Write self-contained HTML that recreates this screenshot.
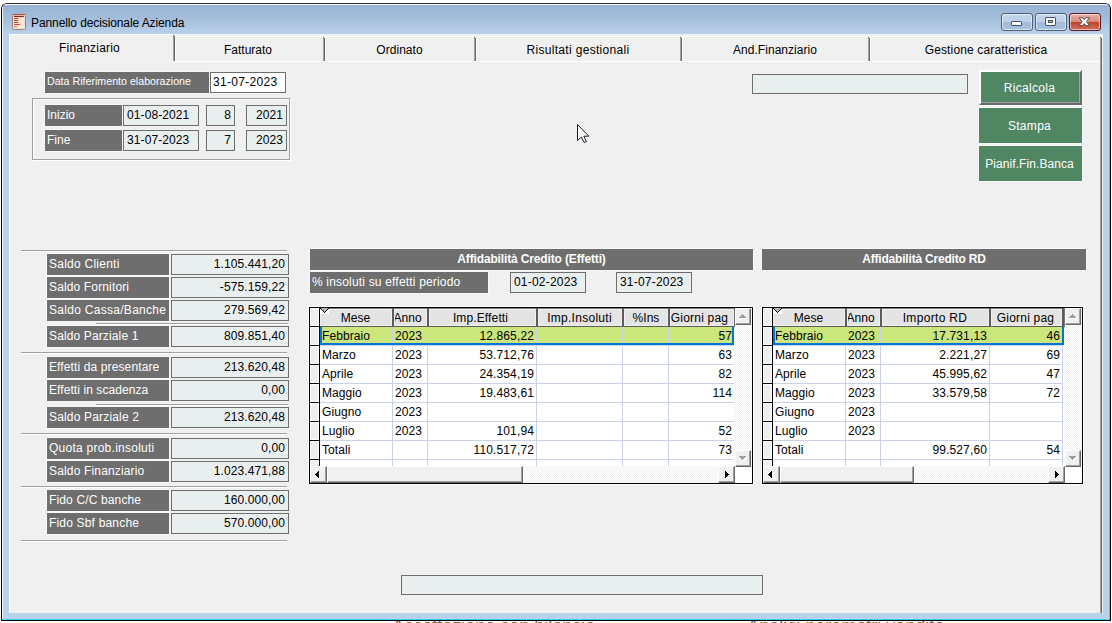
<!DOCTYPE html>
<html lang="it"><head><meta charset="utf-8"><title>Pannello decisionale Azienda</title>
<style>
html,body{margin:0;padding:0;background:#fff;}
body{width:1112px;height:623px;position:relative;overflow:hidden;font-family:"Liberation Sans",Arial,sans-serif;font-size:12px;color:#000;}
div,span,svg{position:absolute;box-sizing:border-box;white-space:nowrap;}
.win{left:1px;top:3px;width:1110px;height:618px;border:1px solid #000;border-top-color:#2c2c2c;border-radius:6px 6px 0 0;background:#b9d1ea;overflow:hidden;}
.cap{left:0;top:0;width:1108px;height:30px;background:linear-gradient(#98b3d3 0,#a1bbd9 42%,#b9d1ea 100%);}
.client{left:9px;top:34px;width:1094px;height:579px;background:#f0f0f0;overflow:hidden;}
.lbl{background:#6e6e6e;box-shadow:0 0 0 1px #f7f7f7;color:#fff;line-height:20px;padding-left:2px;}
.fld{background:#e9efef;border:1px solid #6e6e6e;line-height:19px;padding:0 3px 0 3px;letter-spacing:0.1px;}
.r{text-align:right;}
.cell.r{letter-spacing:.13px;}
.ln{height:2px;border-top:1px solid #a0a0a0;border-bottom:1px solid #fff;}
.btn{background:#508661;color:#fff;text-align:center;line-height:35px;}
.hd{background:#6e6e6e;box-shadow:0 0 0 1px #f7f7f7;color:#fff;font-weight:bold;text-align:center;line-height:20px;}
.tab{text-align:center;line-height:14px;}
.sep{width:2px;border-left:1px solid #a0a0a0;border-right:1px solid #696969;}
.grid{border:1px solid #000;background:#fff;overflow:hidden;box-shadow:0 0 0 1px #fff;}
.gh{background:#e4e4e4;border:1px solid #f0f0f0;height:17px;line-height:17px;overflow:hidden;}
.rh{background:#efefef;border-right:1px solid #000;border-bottom:1px solid #000;left:0;width:10px;box-shadow:inset 1px 1px 0 #fff,inset -1px -1px 0 #fff;}
.cell{letter-spacing:.08px;height:19px;border-right:1px solid #c9d2e9;border-bottom:1px solid #c9d2e9;line-height:18px;padding:0 2px 0 2px;overflow:hidden;}
.sel{background:#cbe77b;}
.sb{background:#f0f0f0;border:1px solid;border-color:#fff #696969 #696969 #fff;box-shadow:inset -1px -1px 0 #a0a0a0;}
.trk{background-color:#f8f8f8;background-image:conic-gradient(#fff 25%,#f0f0f0 0 50%,#fff 0 75%,#f0f0f0 0);background-size:2px 2px;}
.tb{top:13px;width:32px;height:18px;border:1px solid #4f607a;border-radius:3px;box-shadow:inset 0 0 0 1px rgba(255,255,255,.55);}
</style></head><body>

<div style="left:383px;top:616px;font-size:18px;color:#6a6a6a;line-height:20px;"><span style="position:static;font-size:12px;vertical-align:-4px;">&#8226;</span>&nbsp;Accettazione con bilancia</div>
<div style="left:738px;top:616px;font-size:18px;color:#6a6a6a;line-height:20px;"><span style="position:static;font-size:12px;vertical-align:-4px;">&#8226;</span>&nbsp;Analisi parametri vendita</div>
<div class="win">
<div class="cap"></div>
<div style="left:0;top:0;width:1108px;height:1px;background:rgba(255,255,255,.92);"></div>
<div style="left:0;top:0;width:1px;height:616px;background:rgba(255,255,255,.85);"></div>
<div style="left:1107px;top:2px;width:1px;height:614px;background:#35d3f2;"></div>
<div style="left:0;top:615px;width:1108px;height:1px;background:#35d3f2;"></div>
</div>
<svg style="left:12px;top:14px" width="14" height="16" viewBox="0 0 14 16">
<defs><linearGradient id="ig" x1="0" y1="0" x2="1" y2="1"><stop offset="0" stop-color="#fdd3aa"/><stop offset="1" stop-color="#f3e6dc"/></linearGradient>
<linearGradient id="il" x1="0" y1="0" x2="1" y2="0"><stop offset="0" stop-color="#b80f0f"/><stop offset="1" stop-color="#5a3a3a"/></linearGradient></defs>
<rect x="0.5" y="0.5" width="13" height="15" rx="1" fill="url(#ig)" stroke="#97838a"/>
<rect x="1" y="0" width="12" height="1" fill="#b4503f"/>
<rect x="2" y="1.8" width="10" height="1.2" fill="url(#il)"/>
<rect x="2" y="4" width="4.2" height="1" fill="#cc4a38"/><rect x="2" y="6" width="4.2" height="1" fill="#cc4a38"/>
<rect x="2" y="8" width="4.2" height="1" fill="#cc4a38"/><rect x="2" y="10" width="5.8" height="1" fill="#cc4a38"/>
<rect x="2" y="12.2" width="3" height="1" fill="#d8806c"/>
<rect x="7.5" y="4" width="4.5" height="3.4" fill="#f6efe8" opacity=".8"/><rect x="9.5" y="8" width="2.5" height="3" fill="#f6efe8" opacity=".8"/><rect x="6" y="12" width="6" height="1.4" fill="#f6efe8" opacity=".9"/>
</svg>
<div style="left:31px;top:15px;line-height:16px;font-size:12px;letter-spacing:-0.1px;">Pannello decisionale Azienda</div>
<div class="tb" style="left:1001px;background:linear-gradient(#c3d5ea 0,#bdd0e8 48%,#a3bbd8 52%,#a9c1de 100%);"><div style="left:9px;top:7px;width:11px;height:5px;background:#fff;border:1px solid #4a5668;border-radius:1px;"></div></div>
<div class="tb" style="left:1035px;background:linear-gradient(#c3d5ea 0,#bdd0e8 48%,#a3bbd8 52%,#a9c1de 100%);"><div style="left:9px;top:3px;width:11px;height:9px;background:#fff;border:1px solid #4a5668;border-radius:1px;"><div style="left:2px;top:2px;width:5px;height:3px;background:#9fb6d3;border:1px solid #4a5668;"></div></div></div>
<div class="tb" style="left:1069px;border-color:#541a28;background:linear-gradient(#e9b0a6 0,#db8a7c 48%,#c0432d 52%,#d26e5a 100%);"><svg style="left:8px;top:3px" width="13" height="10" viewBox="0 0 13 10"><path d="M1.2,0.8 L4.9,0.8 L6.3,2.6 L7.7,0.8 L11.4,0.8 L8.5,4.6 L11.5,8.6 L7.8,8.6 L6.3,6.6 L4.8,8.6 L1.1,8.6 L4.1,4.6 Z" fill="#fff" stroke="#55505a" stroke-width="1" stroke-linejoin="round"/></svg></div>
<div class="client"></div>
<div style="left:9px;top:34px;width:1px;height:579px;background:#fff;"></div>
<div style="left:9px;top:34px;width:164px;height:1px;background:#fff;"></div>
<div style="left:173px;top:61px;width:927px;height:1px;background:#fff;"></div>
<div style="left:1100px;top:38px;width:2px;height:575px;background:#696969;border-left:1px solid #a0a0a0;"></div>
<div style="left:1100px;top:37px;width:1px;height:1px;background:#696969;"></div>
<div class="sep" style="left:173px;top:36px;width:2px;height:25px;"></div>
<div style="left:173px;top:35px;width:1px;height:1px;background:#696969;"></div>
<div style="left:175px;top:37px;width:1px;height:24px;background:#fafafa;"></div>
<div style="left:176px;top:36px;width:146px;height:1px;background:#fff;"></div>
<div class="sep" style="left:323px;top:38px;width:2px;height:23px;"></div>
<div style="left:323px;top:37px;width:1px;height:1px;background:#696969;"></div>
<div style="left:325px;top:38px;width:1px;height:23px;background:#fafafa;"></div>
<div style="left:326px;top:37px;width:1px;height:1px;background:#fff;"></div>
<div style="left:327px;top:36px;width:146px;height:1px;background:#fff;"></div>
<div class="sep" style="left:474px;top:38px;width:2px;height:23px;"></div>
<div style="left:474px;top:37px;width:1px;height:1px;background:#696969;"></div>
<div style="left:476px;top:38px;width:1px;height:23px;background:#fafafa;"></div>
<div style="left:477px;top:37px;width:1px;height:1px;background:#fff;"></div>
<div style="left:478px;top:36px;width:201px;height:1px;background:#fff;"></div>
<div class="sep" style="left:680px;top:38px;width:2px;height:23px;"></div>
<div style="left:680px;top:37px;width:1px;height:1px;background:#696969;"></div>
<div style="left:682px;top:38px;width:1px;height:23px;background:#fafafa;"></div>
<div style="left:683px;top:37px;width:1px;height:1px;background:#fff;"></div>
<div style="left:684px;top:36px;width:183px;height:1px;background:#fff;"></div>
<div class="sep" style="left:868px;top:38px;width:2px;height:23px;"></div>
<div style="left:868px;top:37px;width:1px;height:1px;background:#696969;"></div>
<div style="left:870px;top:38px;width:1px;height:23px;background:#fafafa;"></div>
<div style="left:871px;top:37px;width:1px;height:1px;background:#fff;"></div>
<div style="left:872px;top:36px;width:227px;height:1px;background:#fff;"></div>
<div class="tab" style="left:8px;top:41px;width:163px;height:14px;letter-spacing:0.2px;">Finanziario</div>
<div class="tab" style="left:174px;top:43px;width:148px;height:14px;letter-spacing:0px;">Fatturato</div>
<div class="tab" style="left:325px;top:43px;width:149px;height:14px;letter-spacing:0.05px;">Ordinato</div>
<div class="tab" style="left:476px;top:43px;width:204px;height:14px;letter-spacing:0.32px;">Risultati gestionali</div>
<div class="tab" style="left:682px;top:43px;width:186px;height:14px;letter-spacing:0.04px;">And.Finanziario</div>
<div class="tab" style="left:871px;top:43px;width:230px;height:14px;letter-spacing:0.14px;">Gestione caratteristica</div>
<div class="lbl" style="left:45px;top:72px;width:164px;height:21px;font-size:10.67px;line-height:19px;">Data Riferimento elaborazione</div>
<div class="fld" style="left:210px;top:72px;width:76px;height:21px;background:#fff;padding-left:2px;letter-spacing:0.3px;">31-07-2023</div>
<div style="left:32px;top:98px;width:258px;height:62px;border:1px solid #a0a0a0;box-shadow:inset 1px 1px 0 #fff,1px 1px 0 #fff;"></div>
<div class="lbl" style="left:45px;top:105px;width:77px;height:21px;">Inizio</div>
<div class="fld" style="left:123px;top:105px;width:76px;height:21px;">01-08-2021</div>
<div class="fld r" style="left:206px;top:105px;width:29px;height:21px;">8</div>
<div class="fld r" style="left:246px;top:105px;width:41px;height:21px;">2021</div>
<div class="lbl" style="left:45px;top:130px;width:77px;height:21px;">Fine</div>
<div class="fld" style="left:123px;top:130px;width:76px;height:21px;">31-07-2023</div>
<div class="fld r" style="left:206px;top:130px;width:29px;height:21px;">7</div>
<div class="fld r" style="left:246px;top:130px;width:41px;height:21px;">2023</div>
<div class="fld" style="left:752px;top:74px;width:216px;height:20px;"></div>
<div class="btn" style="left:979px;top:70px;width:103px;height:35px;border:2px solid;border-color:#fff #696969 #696969 #fff;box-shadow:inset -1px -1px 0 #a0a0a0,1px 1px 0 #f9f9f9;line-height:33px;letter-spacing:0.3px;padding-right:2px;">Ricalcola</div>
<div class="btn" style="left:979px;top:108px;width:103px;height:35px;letter-spacing:0.3px;line-height:37px;padding-right:2px;box-shadow:0 0 0 1px #f8f8f8;">Stampa</div>
<div class="btn" style="left:979px;top:146px;width:103px;height:35px;letter-spacing:0.08px;line-height:37px;padding-right:2px;box-shadow:0 0 0 1px #f8f8f8;">Pianif.Fin.Banca</div>
<div class="lbl" style="left:47px;top:254px;width:122px;height:21px;letter-spacing:0.25px;">Saldo Clienti</div>
<div class="fld r" style="left:171px;top:254px;width:118px;height:21px;letter-spacing:0.1px;">1.105.441,20</div>
<div class="lbl" style="left:47px;top:277px;width:122px;height:21px;letter-spacing:0.14px;">Saldo Fornitori</div>
<div class="fld r" style="left:171px;top:277px;width:118px;height:21px;letter-spacing:0.1px;">-575.159,22</div>
<div class="lbl" style="left:47px;top:300px;width:122px;height:21px;letter-spacing:0.29px;">Saldo Cassa/Banche</div>
<div class="fld r" style="left:171px;top:300px;width:118px;height:21px;letter-spacing:0.1px;">279.569,42</div>
<div class="lbl" style="left:47px;top:326px;width:122px;height:21px;letter-spacing:0.13px;">Saldo Parziale 1</div>
<div class="fld r" style="left:171px;top:326px;width:118px;height:21px;letter-spacing:0.1px;">809.851,40</div>
<div class="lbl" style="left:47px;top:357px;width:122px;height:21px;letter-spacing:0.12px;">Effetti da presentare</div>
<div class="fld r" style="left:171px;top:357px;width:118px;height:21px;letter-spacing:0.1px;">213.620,48</div>
<div class="lbl" style="left:47px;top:380px;width:122px;height:21px;letter-spacing:0.08px;">Effetti in scadenza</div>
<div class="fld r" style="left:171px;top:380px;width:118px;height:21px;letter-spacing:0.1px;">0,00</div>
<div class="lbl" style="left:47px;top:407px;width:122px;height:21px;letter-spacing:0.17px;">Saldo Parziale 2</div>
<div class="fld r" style="left:171px;top:407px;width:118px;height:21px;letter-spacing:0.1px;">213.620,48</div>
<div class="lbl" style="left:47px;top:438px;width:122px;height:21px;letter-spacing:0.25px;">Quota prob.insoluti</div>
<div class="fld r" style="left:171px;top:438px;width:118px;height:21px;letter-spacing:0.1px;">0,00</div>
<div class="lbl" style="left:47px;top:461px;width:122px;height:21px;letter-spacing:0.16px;">Saldo Finanziario</div>
<div class="fld r" style="left:171px;top:461px;width:118px;height:21px;letter-spacing:0.1px;">1.023.471,88</div>
<div class="lbl" style="left:47px;top:490px;width:122px;height:21px;letter-spacing:0.14px;">Fido C/C banche</div>
<div class="fld r" style="left:171px;top:490px;width:118px;height:21px;letter-spacing:0.1px;">160.000,00</div>
<div class="lbl" style="left:47px;top:513px;width:122px;height:21px;letter-spacing:0.18px;">Fido Sbf banche</div>
<div class="fld r" style="left:171px;top:513px;width:118px;height:21px;letter-spacing:0.1px;">570.000,00</div>
<div class="ln" style="left:21px;top:250px;width:266px;"></div>
<div class="ln" style="left:21px;top:352px;width:266px;"></div>
<div class="ln" style="left:21px;top:433px;width:266px;"></div>
<div class="ln" style="left:21px;top:486px;width:266px;"></div>
<div class="ln" style="left:21px;top:540px;width:266px;"></div>
<div class="ln" style="left:96px;top:323px;width:192px;"></div>
<div class="ln" style="left:96px;top:404px;width:192px;"></div>
<div class="hd" style="left:310px;top:249px;width:443px;height:21px;letter-spacing:-0.14px;">Affidabilit&agrave; Credito (Effetti)</div>
<div class="hd" style="left:762px;top:249px;width:324px;height:21px;letter-spacing:-0.2px;">Affidabilit&agrave; Credito RD</div>
<div class="lbl" style="left:310px;top:272px;width:178px;height:21px;letter-spacing:0.18px;">% insoluti su effetti periodo</div>
<div class="fld" style="left:510px;top:272px;width:76px;height:21px;letter-spacing:.2px;">01-02-2023</div>
<div class="fld" style="left:616px;top:272px;width:76px;height:21px;letter-spacing:.2px;">31-07-2023</div>
<div class="grid" style="left:309px;top:307px;width:444px;height:177px;">
<div style="left:10px;top:0;width:414px;height:1px;background:#808080;"></div>
<div style="left:10px;top:18px;width:415px;height:1px;background:#5c5c5c;"></div>
<div class="gh" style="left:10px;top:1px;width:72px;"><span style="left:-1px;right:0;top:0;text-align:center;letter-spacing:0.05px;">Mese</span></div>
<div style="left:82px;top:0;width:2px;height:19px;background:#5c5c5c;"></div>
<div class="gh" style="left:84px;top:1px;width:33px;"><span style="left:-6px;right:0;top:0;text-align:center;letter-spacing:0.05px;">Anno</span></div>
<div style="left:117px;top:0;width:2px;height:19px;background:#5c5c5c;"></div>
<div class="gh" style="left:119px;top:1px;width:107px;"><span style="left:-4px;right:0;top:0;text-align:center;letter-spacing:0.13px;">Imp.Effetti</span></div>
<div style="left:226px;top:0;width:2px;height:19px;background:#5c5c5c;"></div>
<div class="gh" style="left:228px;top:1px;width:84px;"><span style="left:-1px;right:0;top:0;text-align:center;letter-spacing:0.28px;">Imp.Insoluti</span></div>
<div style="left:312px;top:0;width:2px;height:19px;background:#5c5c5c;"></div>
<div class="gh" style="left:314px;top:1px;width:44px;"><span style="left:0px;right:0;top:0;text-align:center;letter-spacing:0.05px;">%Ins</span></div>
<div style="left:358px;top:0;width:2px;height:19px;background:#5c5c5c;"></div>
<div class="gh" style="left:360px;top:1px;width:64px;"><span style="left:-5px;right:0;top:0;text-align:center;letter-spacing:0.2px;">Giorni pag</span></div>
<div style="left:424px;top:0;width:1px;height:19px;background:#6a6a6a;"></div>
<div class="rh" style="top:0;height:19px;"></div>
<svg style="left:10px;top:0" width="9" height="6" viewBox="0 0 9 6" shape-rendering="crispEdges"><rect width="9" height="6" fill="#fff"/><path d="M1,0H8V1H7V2H6V3H5V4H4V3H3V2H2V1H1Z" fill="#b4b4b4"/><path d="M0,0h1v1h-1zM8,0h1v1h-1zM1,1h1v1h-1zM7,1h1v1h-1zM2,2h1v1h-1zM6,2h1v1h-1zM3,3h1v1h-1zM5,3h1v1h-1zM4,4h1v1h-1z" fill="#000"/></svg>
<div class="rh" style="top:19px;height:19px;"></div>
<div class="cell sel" style="left:10px;top:19px;width:73px;">Febbraio</div>
<div class="cell sel" style="left:83px;top:19px;width:35px;">2023</div>
<div class="cell sel r" style="left:118px;top:19px;width:109px;">12.865,22</div>
<div class="cell sel r" style="left:227px;top:19px;width:86px;"></div>
<div class="cell sel r" style="left:313px;top:19px;width:46px;"></div>
<div class="cell sel r" style="left:359px;top:19px;width:65px;border-right:0;">57</div>
<div class="rh" style="top:38px;height:19px;"></div>
<div class="cell" style="left:10px;top:38px;width:73px;">Marzo</div>
<div class="cell" style="left:83px;top:38px;width:35px;">2023</div>
<div class="cell r" style="left:118px;top:38px;width:109px;">53.712,76</div>
<div class="cell r" style="left:227px;top:38px;width:86px;"></div>
<div class="cell r" style="left:313px;top:38px;width:46px;"></div>
<div class="cell r" style="left:359px;top:38px;width:65px;border-right:0;">63</div>
<div class="rh" style="top:57px;height:19px;"></div>
<div class="cell" style="left:10px;top:57px;width:73px;">Aprile</div>
<div class="cell" style="left:83px;top:57px;width:35px;">2023</div>
<div class="cell r" style="left:118px;top:57px;width:109px;">24.354,19</div>
<div class="cell r" style="left:227px;top:57px;width:86px;"></div>
<div class="cell r" style="left:313px;top:57px;width:46px;"></div>
<div class="cell r" style="left:359px;top:57px;width:65px;border-right:0;">82</div>
<div class="rh" style="top:76px;height:19px;"></div>
<div class="cell" style="left:10px;top:76px;width:73px;">Maggio</div>
<div class="cell" style="left:83px;top:76px;width:35px;">2023</div>
<div class="cell r" style="left:118px;top:76px;width:109px;">19.483,61</div>
<div class="cell r" style="left:227px;top:76px;width:86px;"></div>
<div class="cell r" style="left:313px;top:76px;width:46px;"></div>
<div class="cell r" style="left:359px;top:76px;width:65px;border-right:0;">114</div>
<div class="rh" style="top:95px;height:19px;"></div>
<div class="cell" style="left:10px;top:95px;width:73px;">Giugno</div>
<div class="cell" style="left:83px;top:95px;width:35px;">2023</div>
<div class="cell r" style="left:118px;top:95px;width:109px;"></div>
<div class="cell r" style="left:227px;top:95px;width:86px;"></div>
<div class="cell r" style="left:313px;top:95px;width:46px;"></div>
<div class="cell r" style="left:359px;top:95px;width:65px;border-right:0;"></div>
<div class="rh" style="top:114px;height:19px;"></div>
<div class="cell" style="left:10px;top:114px;width:73px;">Luglio</div>
<div class="cell" style="left:83px;top:114px;width:35px;">2023</div>
<div class="cell r" style="left:118px;top:114px;width:109px;">101,94</div>
<div class="cell r" style="left:227px;top:114px;width:86px;"></div>
<div class="cell r" style="left:313px;top:114px;width:46px;"></div>
<div class="cell r" style="left:359px;top:114px;width:65px;border-right:0;">52</div>
<div class="rh" style="top:133px;height:19px;"></div>
<div class="cell" style="left:10px;top:133px;width:73px;">Totali</div>
<div class="cell" style="left:83px;top:133px;width:35px;"></div>
<div class="cell r" style="left:118px;top:133px;width:109px;">110.517,72</div>
<div class="cell r" style="left:227px;top:133px;width:86px;"></div>
<div class="cell r" style="left:313px;top:133px;width:46px;"></div>
<div class="cell r" style="left:359px;top:133px;width:65px;border-right:0;">73</div>
<div class="rh" style="top:152px;height:19px;"></div>
<div class="cell" style="left:10px;top:152px;width:73px;"></div>
<div class="cell" style="left:83px;top:152px;width:35px;"></div>
<div class="cell r" style="left:118px;top:152px;width:109px;"></div>
<div class="cell r" style="left:227px;top:152px;width:86px;"></div>
<div class="cell r" style="left:313px;top:152px;width:46px;"></div>
<div class="cell r" style="left:359px;top:152px;width:65px;border-right:0;"></div>
<div style="left:10px;top:19px;width:414px;height:18px;border:2px solid #0574d8;border-top:0;"></div>
<div class="trk" style="left:424px;top:19px;width:18px;height:139px;"></div>
<div style="left:425px;top:0;width:17px;height:19px;background:#fafafa;"></div>
<div class="sb" style="left:425px;top:0;width:16px;height:17px;"></div>
<svg style="left:429px;top:6px" width="9" height="6" viewBox="0 0 9 6" shape-rendering="crispEdges"><path d="M4,1h1v1h1v1h1v1h1v1h-7v-1h1v-1h1v-1h1z" fill="#fff"/><path d="M3,0h1v1h1v1h1v1h1v1h-7v-1h1v-1h1v-1h1z" fill="#9d9d9d"/></svg>
<div class="sb" style="left:425px;top:142px;width:16px;height:17px;"></div>
<svg style="left:429px;top:148px" width="9" height="6" viewBox="0 0 9 6" shape-rendering="crispEdges"><path d="M1,1h7v1h-1v1h-1v1h-1v1h-1v-1h-1v-1h-1v-1h-1z" fill="#fff"/><path d="M0,0h7v1h-1v1h-1v1h-1v1h-1v-1h-1v-1h-1v-1h-1z" fill="#9d9d9d"/></svg>
<div class="trk" style="left:0;top:158px;width:425px;height:17px;"></div>
<div style="left:425px;top:159px;width:17px;height:16px;background:#fff;"></div>
<div class="sb" style="left:0;top:158px;width:17px;height:17px;"></div>
<svg style="left:5px;top:163px" width="4" height="7" viewBox="0 0 4 7" shape-rendering="crispEdges"><path d="M3,0h1v7h-1v-1h-1v-1h-1v-1h-1v-1h1v-1h1v-1h1z" fill="#000"/></svg>
<div class="sb" style="left:17px;top:158px;width:196px;height:17px;"></div>
<div class="sb" style="left:408px;top:158px;width:17px;height:17px;"></div>
<svg style="left:415px;top:163px" width="4" height="7" viewBox="0 0 4 7" shape-rendering="crispEdges"><path d="M0,0h1v1h1v1h1v1h1v1h-1v1h-1v1h-1v1h-1z" fill="#000"/></svg>
</div>
<div class="grid" style="left:762px;top:307px;width:321px;height:177px;">
<div style="left:10px;top:0;width:291px;height:1px;background:#808080;"></div>
<div style="left:10px;top:18px;width:292px;height:1px;background:#5c5c5c;"></div>
<div class="gh" style="left:10px;top:1px;width:72px;"><span style="left:-1px;right:0;top:0;text-align:center;letter-spacing:0.05px;">Mese</span></div>
<div style="left:82px;top:0;width:2px;height:19px;background:#5c5c5c;"></div>
<div class="gh" style="left:84px;top:1px;width:33px;"><span style="left:-6px;right:0;top:0;text-align:center;letter-spacing:0.05px;">Anno</span></div>
<div style="left:117px;top:0;width:2px;height:19px;background:#5c5c5c;"></div>
<div class="gh" style="left:119px;top:1px;width:107px;"><span style="left:-1px;right:0;top:0;text-align:center;letter-spacing:0.32px;">Importo RD</span></div>
<div style="left:226px;top:0;width:2px;height:19px;background:#5c5c5c;"></div>
<div class="gh" style="left:228px;top:1px;width:71px;"><span style="left:-2px;right:0;top:0;text-align:center;letter-spacing:0.22px;">Giorni pag</span></div>
<div style="left:299px;top:0;width:3px;height:19px;background:#5c5c5c;"></div>
<div style="left:301px;top:0;width:1px;height:19px;background:#7a7a7a;"></div>
<div class="rh" style="top:0;height:19px;"></div>
<svg style="left:10px;top:0" width="9" height="6" viewBox="0 0 9 6" shape-rendering="crispEdges"><rect width="9" height="6" fill="#fff"/><path d="M1,0H8V1H7V2H6V3H5V4H4V3H3V2H2V1H1Z" fill="#b4b4b4"/><path d="M0,0h1v1h-1zM8,0h1v1h-1zM1,1h1v1h-1zM7,1h1v1h-1zM2,2h1v1h-1zM6,2h1v1h-1zM3,3h1v1h-1zM5,3h1v1h-1zM4,4h1v1h-1z" fill="#000"/></svg>
<div class="rh" style="top:19px;height:19px;"></div>
<div class="cell sel" style="left:10px;top:19px;width:73px;">Febbraio</div>
<div class="cell sel" style="left:83px;top:19px;width:35px;">2023</div>
<div class="cell sel r" style="left:118px;top:19px;width:109px;">17.731,13</div>
<div class="cell sel r" style="left:227px;top:19px;width:73px;">46</div>
<div class="rh" style="top:38px;height:19px;"></div>
<div class="cell" style="left:10px;top:38px;width:73px;">Marzo</div>
<div class="cell" style="left:83px;top:38px;width:35px;">2023</div>
<div class="cell r" style="left:118px;top:38px;width:109px;">2.221,27</div>
<div class="cell r" style="left:227px;top:38px;width:73px;">69</div>
<div class="rh" style="top:57px;height:19px;"></div>
<div class="cell" style="left:10px;top:57px;width:73px;">Aprile</div>
<div class="cell" style="left:83px;top:57px;width:35px;">2023</div>
<div class="cell r" style="left:118px;top:57px;width:109px;">45.995,62</div>
<div class="cell r" style="left:227px;top:57px;width:73px;">47</div>
<div class="rh" style="top:76px;height:19px;"></div>
<div class="cell" style="left:10px;top:76px;width:73px;">Maggio</div>
<div class="cell" style="left:83px;top:76px;width:35px;">2023</div>
<div class="cell r" style="left:118px;top:76px;width:109px;">33.579,58</div>
<div class="cell r" style="left:227px;top:76px;width:73px;">72</div>
<div class="rh" style="top:95px;height:19px;"></div>
<div class="cell" style="left:10px;top:95px;width:73px;">Giugno</div>
<div class="cell" style="left:83px;top:95px;width:35px;">2023</div>
<div class="cell r" style="left:118px;top:95px;width:109px;"></div>
<div class="cell r" style="left:227px;top:95px;width:73px;"></div>
<div class="rh" style="top:114px;height:19px;"></div>
<div class="cell" style="left:10px;top:114px;width:73px;">Luglio</div>
<div class="cell" style="left:83px;top:114px;width:35px;">2023</div>
<div class="cell r" style="left:118px;top:114px;width:109px;"></div>
<div class="cell r" style="left:227px;top:114px;width:73px;"></div>
<div class="rh" style="top:133px;height:19px;"></div>
<div class="cell" style="left:10px;top:133px;width:73px;">Totali</div>
<div class="cell" style="left:83px;top:133px;width:35px;"></div>
<div class="cell r" style="left:118px;top:133px;width:109px;">99.527,60</div>
<div class="cell r" style="left:227px;top:133px;width:73px;">54</div>
<div class="rh" style="top:152px;height:19px;"></div>
<div class="cell" style="left:10px;top:152px;width:73px;"></div>
<div class="cell" style="left:83px;top:152px;width:35px;"></div>
<div class="cell r" style="left:118px;top:152px;width:109px;"></div>
<div class="cell r" style="left:227px;top:152px;width:73px;"></div>
<div style="left:10px;top:19px;width:291px;height:18px;border:2px solid #0574d8;border-top:0;"></div>
<div class="trk" style="left:301px;top:19px;width:18px;height:139px;"></div>
<div style="left:302px;top:0;width:17px;height:19px;background:#fafafa;"></div>
<div class="sb" style="left:302px;top:0;width:16px;height:17px;"></div>
<svg style="left:306px;top:6px" width="9" height="6" viewBox="0 0 9 6" shape-rendering="crispEdges"><path d="M4,1h1v1h1v1h1v1h1v1h-7v-1h1v-1h1v-1h1z" fill="#fff"/><path d="M3,0h1v1h1v1h1v1h1v1h-7v-1h1v-1h1v-1h1z" fill="#9d9d9d"/></svg>
<div class="sb" style="left:302px;top:142px;width:16px;height:17px;"></div>
<svg style="left:306px;top:148px" width="9" height="6" viewBox="0 0 9 6" shape-rendering="crispEdges"><path d="M1,1h7v1h-1v1h-1v1h-1v1h-1v-1h-1v-1h-1v-1h-1z" fill="#fff"/><path d="M0,0h7v1h-1v1h-1v1h-1v1h-1v-1h-1v-1h-1v-1h-1z" fill="#9d9d9d"/></svg>
<div class="trk" style="left:0;top:158px;width:302px;height:17px;"></div>
<div style="left:302px;top:159px;width:17px;height:16px;background:#fff;"></div>
<div class="sb" style="left:0;top:158px;width:17px;height:17px;"></div>
<svg style="left:5px;top:163px" width="4" height="7" viewBox="0 0 4 7" shape-rendering="crispEdges"><path d="M3,0h1v7h-1v-1h-1v-1h-1v-1h-1v-1h1v-1h1v-1h1z" fill="#000"/></svg>
<div class="sb" style="left:17px;top:158px;width:134px;height:17px;"></div>
<div class="sb" style="left:285px;top:158px;width:17px;height:17px;"></div>
<svg style="left:292px;top:163px" width="4" height="7" viewBox="0 0 4 7" shape-rendering="crispEdges"><path d="M0,0h1v1h1v1h1v1h1v1h-1v1h-1v1h-1v1h-1z" fill="#000"/></svg>
</div>
<div class="fld" style="left:401px;top:575px;width:362px;height:20px;"></div>
<svg style="left:575px;top:122px" width="16" height="23" viewBox="0 0 16 23"><path d="M2.5,2.5 L2.5,18.5 L6.4,15 L9.2,20.6 L11.4,19.6 L8.8,14.2 L13.8,14.2 Z" fill="#fff" stroke="#1a1a2a" stroke-width="1" stroke-linejoin="round"/></svg>
</body></html>
